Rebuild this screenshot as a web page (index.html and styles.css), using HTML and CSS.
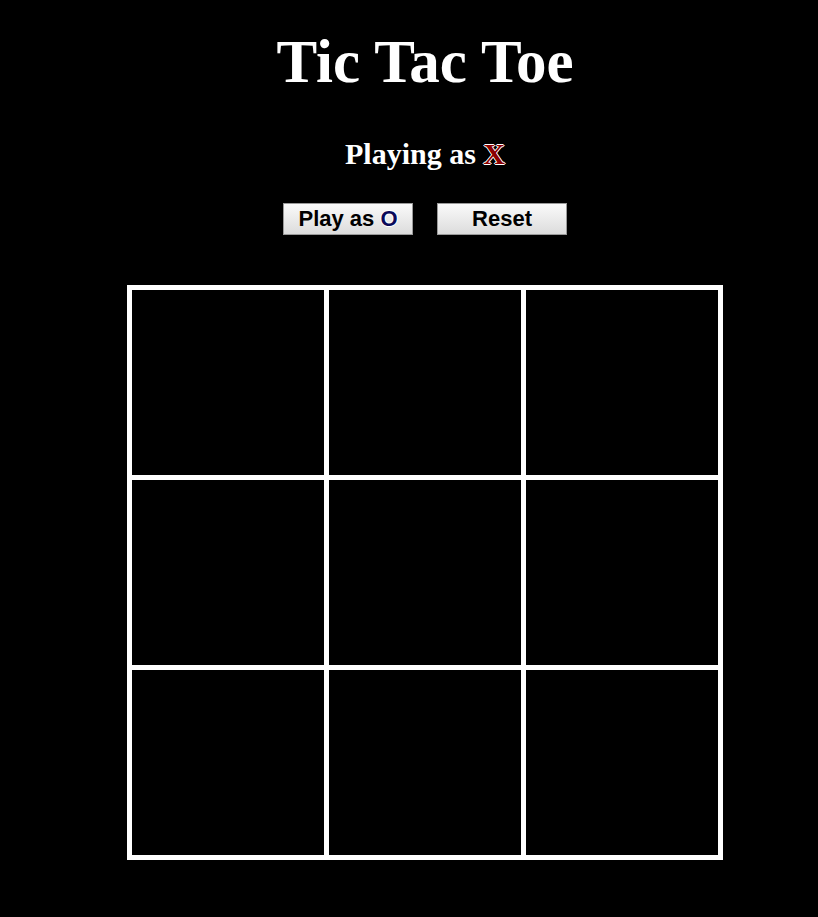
FILE: index.html
```html
<!DOCTYPE html>
<html>
<head>
<meta charset="utf-8">
<title>Tic Tac Toe</title>
<link rel="stylesheet" href="styles.css">
</head>
<body>
<div class="page">
  <h1 class="title">Tic Tac Toe</h1>
  <h2 class="status">Playing as <span class="mark-x">X</span></h2>
  <div class="controls">
    <button class="btn">Play as <span class="mark-o">O</span></button>
    <button class="btn">Reset</button>
  </div>
  <div class="board">
    <div class="cell"></div>
    <div class="cell"></div>
    <div class="cell"></div>
    <div class="cell"></div>
    <div class="cell"></div>
    <div class="cell"></div>
    <div class="cell"></div>
    <div class="cell"></div>
    <div class="cell"></div>
  </div>
</div>
</body>
</html>
```
FILE: styles.css
```css
html, body {
  margin: 0;
  background: #000;
}
.page {
  padding: 27px 0 0 32px;
  display: flex;
  flex-direction: column;
  align-items: center;
  font-family: "Liberation Serif", "Times New Roman", serif;
  color: #fff;
}
.title {
  margin: 0;
  font-size: 61px;
  line-height: 70px;
  font-weight: bold;
}
.status {
  margin: 39px 0 0;
  font-size: 30px;
  line-height: 36px;
  font-weight: bold;
}
.mark-x {
  color: #8b0000;
  text-shadow: 1px 0 0 #fff, -1px 0 0 #fff, 0 1px 0 #fff, 0 -1px 0 #fff;
}
.controls {
  margin-top: 31px;
  display: flex;
  gap: 24px;
}
.btn {
  width: 130px;
  height: 32px;
  padding: 0;
  border: 1px solid #9a9a9a;
  border-radius: 0;
  background: linear-gradient(#fafafa, #dcdcdc);
  font-family: "Liberation Sans", Arial, sans-serif;
  font-size: 22px;
  line-height: 30px;
  font-weight: bold;
  color: #000;
}
.mark-o {
  color: #0a0a5a;
  text-shadow: 1px 0 0 #fff, -1px 0 0 #fff, 0 1px 0 #fff, 0 -1px 0 #fff;
}
.board {
  margin-top: 50px;
  display: grid;
  grid-template-columns: repeat(3, 192px);
  grid-template-rows: repeat(3, 185px);
  gap: 5px;
  padding: 5px;
  background: #fff;
}
.cell {
  background: #000;
}
```
